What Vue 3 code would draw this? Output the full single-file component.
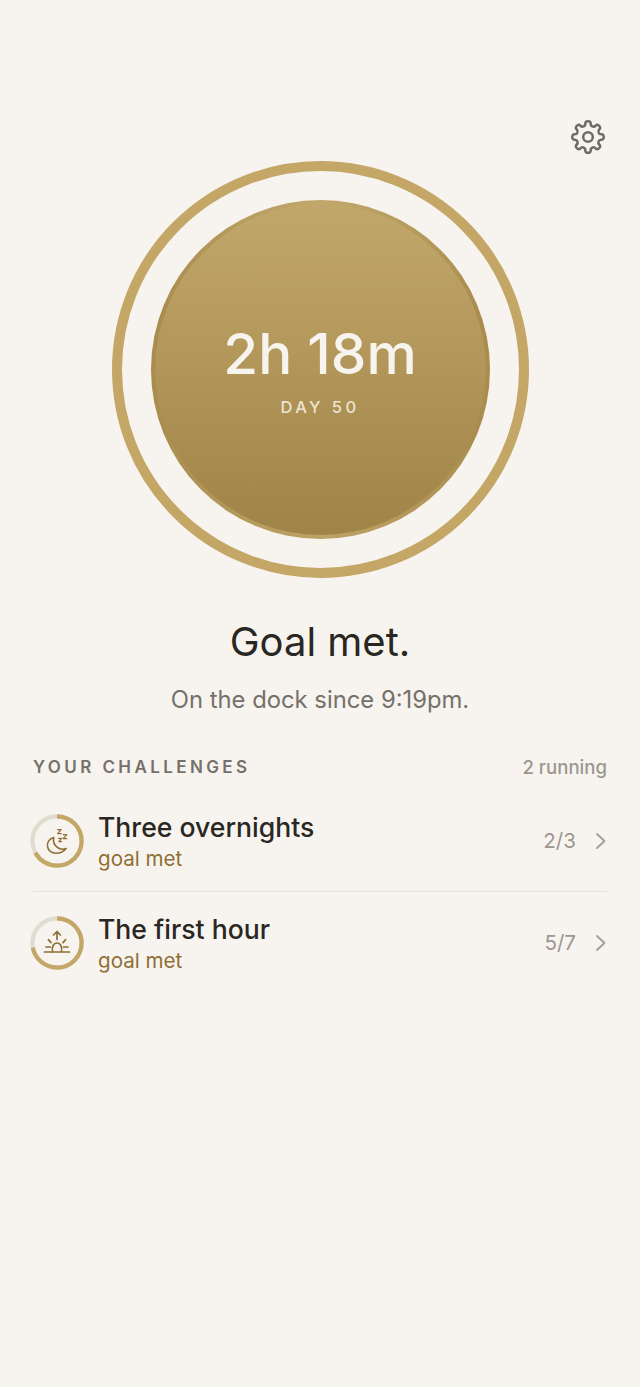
<template>
  <div class="screen">
    <div class="top-bar">
      <svg class="gear" width="36" height="36" viewBox="0 0 36 36" fill="none" stroke="#6f6b63" stroke-width="2.5" stroke-linecap="round" stroke-linejoin="round">
        <path :d="gearPath"/>
        <circle cx="18" cy="18" r="4.8"/>
      </svg>
    </div>

    <div class="ring">
      <div class="disc">
        <div class="time">2h 18m</div>
        <div class="day">DAY 50</div>
      </div>
    </div>

    <h1 class="status">Goal met.</h1>
    <p class="since">On the dock since 9:19pm.</p>

    <section class="challenges">
      <div class="section-head">
        <span class="section-title">YOUR CHALLENGES</span>
        <span class="section-count">2 running</span>
      </div>

      <div v-for="c in challenges" :key="c.name" class="row">
        <div class="badge">
          <svg width="54" height="54" viewBox="0 0 54 54" fill="none">
            <circle cx="27" cy="27" r="24.6" stroke="#e0dccf" stroke-width="4.2"/>
            <circle cx="27" cy="27" r="24.6" stroke="#c4a767" stroke-width="4.2" :stroke-dasharray="dash(c.progress)" transform="rotate(-90 27 27)"/>
            <g v-if="c.icon === 'moon'" stroke="#8f6f35" stroke-width="1.6" stroke-linecap="round" stroke-linejoin="round">
              <path d="M23.8 23.6c-4.2 1.4-6.8 4.8-6.3 8.8c.6 4.2 4.2 7 8.4 6.9c4.4 0 8-1.8 10.2-4.8c-3.2 1.2-7 .6-9.4-1.6c-2.8-2.4-3.8-5.8-2.9-9.3z"/>
              <path d="M27.6 15.6h3.6l-3.6 4h3.6M33.2 20.6h3.6l-3.6 4h3.6M28.8 24.4h2.8l-2.8 3.2h2.8" stroke-width="1.25"/>
            </g>
            <g v-else stroke="#8f6f35" stroke-width="1.7" stroke-linecap="round" stroke-linejoin="round">
              <path d="M14.5 36h25"/>
              <path d="M22.6 36c-1.2-5 1-9 4.4-9s5.6 4 4.4 9"/>
              <path d="M27 23.5v-8M23.6 19l3.4-3.5l3.4 3.5"/>
              <path d="M16 31h4.5M33.5 31h4.5M18.4 23.6l2.6 3M35.6 23.6l-2.6 3"/>
            </g>
          </svg>
        </div>
        <div class="info">
          <div class="name">{{ c.name }}</div>
          <div class="state">goal met</div>
        </div>
        <span class="score">{{ c.score }}</span>
        <svg class="chev" width="12" height="18" viewBox="0 0 12 18" fill="none" stroke="#a5a199" stroke-width="2" stroke-linecap="round" stroke-linejoin="round">
          <path d="M2 2l7.5 7l-7.5 7"/>
        </svg>
      </div>
    </section>
  </div>
</template>

<script setup>
const challenges = [
  { name: 'Three overnights', score: '2/3', progress: 2 / 3, icon: 'moon' },
  { name: 'The first hour', score: '5/7', progress: 5 / 7, icon: 'sun' }
]

function dash(p) {
  const len = 2 * Math.PI * 24.6
  return `${len * p} ${len}`
}

// eight rounded teeth, smoothed through the midpoints
function buildGear(teeth, outer, inner) {
  const pts = []
  const step = (Math.PI * 2) / teeth
  for (let i = 0; i < teeth; i++) {
    const a = i * step - Math.PI / 2
    pts.push([a - step * 0.22, outer], [a + step * 0.22, outer], [a + step * 0.28, inner], [a + step * 0.72, inner])
  }
  const xy = ([a, r]) => [18 + r * Math.cos(a), 18 + r * Math.sin(a)]
  const mid = (p, q) => [(p[0] + q[0]) / 2, (p[1] + q[1]) / 2]
  const coords = pts.map(xy)
  const start = mid(coords[coords.length - 1], coords[0])
  let d = `M${start[0].toFixed(2)} ${start[1].toFixed(2)}`
  coords.forEach((c, i) => {
    const m = mid(c, coords[(i + 1) % coords.length])
    d += `Q${c[0].toFixed(2)} ${c[1].toFixed(2)} ${m[0].toFixed(2)} ${m[1].toFixed(2)}`
  })
  return d + 'Z'
}

const gearPath = buildGear(8, 16, 11.6)
</script>

<style>
body {
  background: #f7f4ef;
}
</style>

<style scoped>
.screen {
  width: 640px;
  height: 1387px;
  background: #f7f4ef;
  font-family: Inter, "Noto Sans", sans-serif;
  display: flex;
  flex-direction: column;
  align-items: center;
  box-sizing: border-box;
  padding-top: 119px;
  overflow: hidden;
}

.top-bar {
  width: 100%;
  height: 36px;
  display: flex;
  justify-content: flex-end;
  padding-right: 34px;
  box-sizing: border-box;
}

.ring {
  width: 417px;
  height: 417px;
  margin-top: 6px;
  box-sizing: border-box;
  border: 10px solid #c4a767;
  border-radius: 50%;
  display: flex;
  align-items: center;
  justify-content: center;
}

.disc {
  width: 339px;
  height: 339px;
  box-sizing: border-box;
  border: 4px solid transparent;
  border-radius: 50%;
  background:
    linear-gradient(180deg, #c2a76b 0%, #a08347 100%) padding-box,
    conic-gradient(#c2a76b 0deg, #a98c4e 70deg, #a98c4e 110deg, #bda265 180deg, #a98c4e 250deg, #a98c4e 290deg, #c2a76b 360deg) border-box;
  display: flex;
  flex-direction: column;
  align-items: center;
  color: #f7f4ef;
}

.time {
  margin-top: 119px;
  font-size: 56.6px;
  line-height: 62px;
  font-weight: 500;
}

.day {
  margin-top: 12px;
  font-size: 16.5px;
  line-height: 20px;
  font-weight: 500;
  letter-spacing: 3.4px;
  color: #ece4d0;
}

.status {
  margin: 38px 0 0;
  font-size: 40px;
  line-height: 52px;
  font-weight: 400;
  color: #2a2723;
}

.since {
  margin: 17px 0 0;
  font-size: 23.8px;
  line-height: 30px;
  color: #75716a;
}

.challenges {
  width: 574px;
  margin-top: 40px;
}

.section-head {
  display: flex;
  justify-content: space-between;
  align-items: center;
  height: 24px;
}

.section-title {
  font-size: 17px;
  font-weight: 600;
  letter-spacing: 3.4px;
  color: #75716a;
}

.section-count {
  font-size: 18.6px;
  font-weight: 500;
  color: #9b978f;
}

.row {
  display: flex;
  align-items: center;
  height: 101px;
  position: relative;
}

.section-head + .row {
  margin-top: 11px;
}

.row + .row {
  border-top: 1px solid #e3dfd7;
}

.badge {
  width: 54px;
  height: 54px;
  margin-left: -3px;
  margin-right: 14px;
  flex-shrink: 0;
}

.info {
  flex: 1;
}

.name {
  font-size: 26.6px;
  line-height: 35px;
  font-weight: 500;
  color: #2a2723;
}

.state {
  font-size: 20.6px;
  line-height: 27px;
  color: #8f6f35;
}

.score {
  font-size: 20.6px;
  color: #9b978f;
  margin-right: 19px;
}

.chev {
  flex-shrink: 0;
}
</style>
